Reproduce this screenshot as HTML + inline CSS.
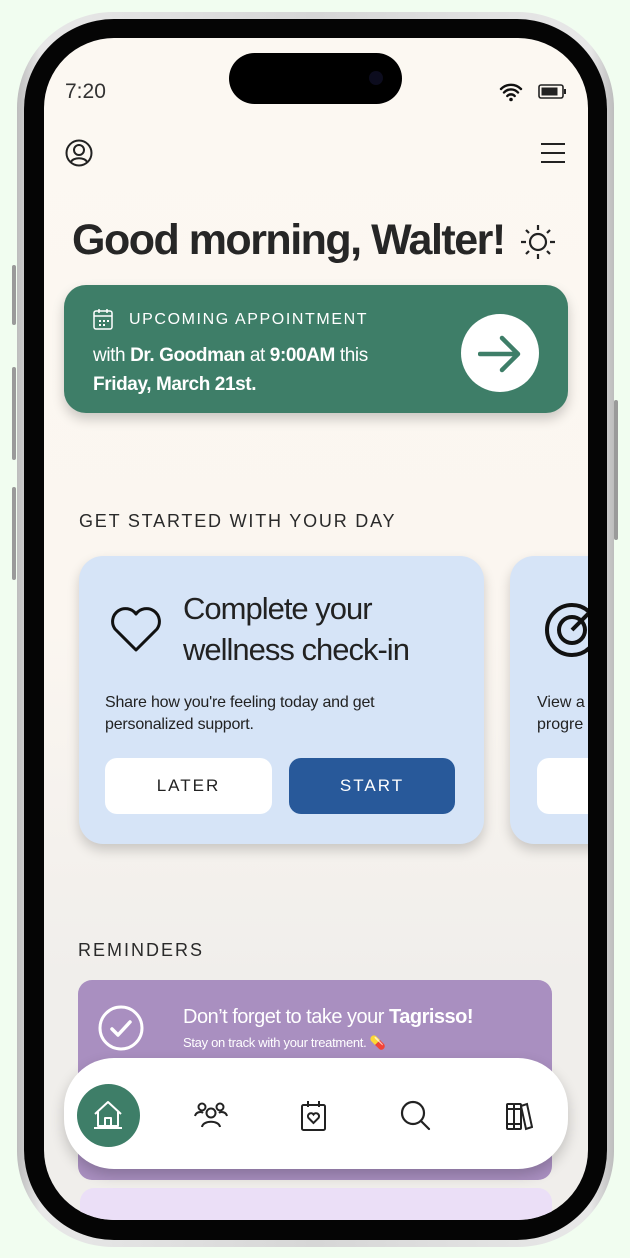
<!DOCTYPE html><html><head><style>
*{margin:0;padding:0;box-sizing:border-box}
body{width:630px;height:1258px;background:#f1fdf0;position:relative;overflow:hidden;font-family:"Liberation Sans",sans-serif;color:#222}
.frame{position:absolute;left:17px;top:12px;width:597px;height:1235px;border-radius:96px;background:linear-gradient(90deg,#bdbdbd,#e8e8e8 4%,#d6d6d6 50%,#e8e8e8 96%,#bdbdbd);}
.bezel{position:absolute;left:24px;top:19px;width:583px;height:1221px;border-radius:90px;background:#050505}
.screen{position:absolute;left:44px;top:38px;width:544px;height:1182px;border-radius:70px;overflow:hidden;background:linear-gradient(#fcf8f2 0%,#fbf6f0 50%,#f0eeeb 80%)}
.btn{position:absolute;background:#9a9a9a;width:4px;border-radius:2px}
.abs{position:absolute}
</style></head><body>
<div class="frame"></div>
<div class="btn" style="left:12px;top:265px;height:60px"></div>
<div class="btn" style="left:12px;top:367px;height:93px"></div>
<div class="btn" style="left:12px;top:487px;height:93px"></div>
<div class="btn" style="left:614px;top:400px;height:140px"></div>
<div class="bezel"></div>
<div class="screen">
  <div class="abs" style="left:185px;top:15px;width:173px;height:51px;border-radius:26px;background:#000"></div>
  <div class="abs" style="left:325px;top:33px;width:14px;height:14px;border-radius:7px;background:#0c0c1e"></div>
  <div class="abs" style="left:21px;top:42px;font-size:21px;color:#333">7:20</div>
  <svg class="abs" style="left:455px;top:44px" width="24" height="20" viewBox="0 0 24 20"><path d="M2 7a14 14 0 0 1 20 0M5 10.5a9.5 9.5 0 0 1 14 0M8.3 14a5 5 0 0 1 7.4 0" stroke="#111" stroke-width="2.4" fill="none" stroke-linecap="round"/><circle cx="12" cy="17.5" r="1.8" fill="#111"/></svg>
  <svg class="abs" style="left:494px;top:46px" width="30" height="16"><rect x="1" y="1" width="24" height="13" rx="2" fill="none" stroke="#222" stroke-width="1.6"/><rect x="3.5" y="3.5" width="16" height="8" fill="#222"/><rect x="26" y="5" width="2" height="5" fill="#222"/></svg>
  <svg class="abs" style="left:21px;top:101px" width="28" height="28" viewBox="0 0 28 28"><circle cx="14" cy="14" r="12.5" fill="none" stroke="#222" stroke-width="2"/><circle cx="14" cy="11" r="5" fill="none" stroke="#222" stroke-width="2"/><path d="M6 23c2-5 14-5 16 0" fill="none" stroke="#222" stroke-width="2"/></svg>
  <svg class="abs" style="left:496px;top:104px" width="26" height="22"><path d="M1 2h24M1 11h24M1 20h24" stroke="#222" stroke-width="2"/></svg>
  <div class="abs" style="left:28px;top:178px;font-size:43px;font-weight:bold;letter-spacing:-1.5px;color:#262626">Good morning, Walter!</div>
  <svg class="abs" style="left:474px;top:184px" width="40" height="40" viewBox="0 0 40 40"><circle cx="20" cy="20" r="8" fill="none" stroke="#222" stroke-width="2.2"/><g stroke="#222" stroke-width="2.2"><path d="M20 3v5M20 32v5M3 20h5M32 20h5M8 8l3 3M29 29l3 3M8 32l3-3M29 11l3-3"/></g></svg>
  <div class="abs" style="left:20px;top:247px;width:504px;height:128px;border-radius:22px;background:#3e7e68;box-shadow:0 6px 12px rgba(0,0,0,.2)"></div>
  <svg class="abs" style="left:49px;top:270px" width="20" height="22"><rect x="1" y="3" width="18" height="18" rx="2" fill="none" stroke="#fff" stroke-width="1.5"/><path d="M1 8h18M6 1v4M14 1v4" stroke="#fff" stroke-width="1.5"/><g fill="#fff"><rect x="6" y="12" width="2" height="2"/><rect x="10" y="12" width="2" height="2"/><rect x="14" y="12" width="2" height="2"/><rect x="6" y="16" width="2" height="2"/><rect x="10" y="16" width="2" height="2"/></g></svg>
  <div class="abs" style="left:85px;top:273px;font-size:16px;letter-spacing:1.6px;color:#fff">UPCOMING APPOINTMENT</div>
  <div class="abs" style="left:49px;top:303px;font-size:19px;line-height:29px;color:#fff;letter-spacing:-.4px">with <b>Dr. Goodman</b> at <b>9:00AM</b> this<br><b>Friday, March 21st.</b></div>
  <div class="abs" style="left:417px;top:276px;width:78px;height:78px;border-radius:50%;background:#fff"></div>
  <svg class="abs" style="left:434px;top:296px" width="44" height="40"><path d="M2 20h38M24 4l16 16-16 16" stroke="#3e7e68" stroke-width="4.5" fill="none" stroke-linecap="round" stroke-linejoin="round"/></svg>
  <div class="abs" style="left:35px;top:473px;font-size:18px;letter-spacing:1.8px;color:#2a2a2a">GET STARTED WITH YOUR DAY</div>
  <div class="abs" style="left:35px;top:518px;width:405px;height:288px;border-radius:24px;background:#d6e4f7;box-shadow:0 6px 12px rgba(0,0,0,.18)"></div>
  <svg class="abs" style="left:64px;top:566px" width="56" height="50" viewBox="0 0 56 50"><path d="M28 46L7 25A12 12 0 0 1 28 10 12 12 0 0 1 49 25Z" fill="none" stroke="#111" stroke-width="3" stroke-linejoin="round"/></svg>
  <div class="abs" style="left:139px;top:550px;font-size:31px;line-height:41px;letter-spacing:-1px;color:#222">Complete your<br>wellness check-in</div>
  <div class="abs" style="left:61px;top:654px;font-size:16px;line-height:22px;color:#222;letter-spacing:-.2px">Share how you're feeling today and get<br>personalized support.</div>
  <div class="abs" style="left:61px;top:720px;width:167px;height:56px;border-radius:12px;background:#fff;text-align:center;line-height:56px;font-size:17px;letter-spacing:2px">LATER</div>
  <div class="abs" style="left:245px;top:720px;width:166px;height:56px;border-radius:12px;background:#28599a;color:#fff;text-align:center;line-height:56px;font-size:17px;letter-spacing:2px">START</div>
  <div class="abs" style="left:466px;top:518px;width:200px;height:288px;border-radius:24px;background:#d6e4f7;box-shadow:0 6px 12px rgba(0,0,0,.18)"></div>
  <svg class="abs" style="left:498px;top:562px" width="60" height="60"><circle cx="30" cy="30" r="25" fill="none" stroke="#111" stroke-width="4"/><circle cx="30" cy="30" r="13" fill="none" stroke="#111" stroke-width="4"/><path d="M30 30l22-22" stroke="#111" stroke-width="4"/></svg>
  <div class="abs" style="left:493px;top:654px;font-size:16px;line-height:22px">View a<br>progre</div>
  <div class="abs" style="left:493px;top:720px;width:100px;height:56px;border-radius:12px;background:#fff"></div>
  <div class="abs" style="left:34px;top:902px;font-size:18px;letter-spacing:2px;color:#2a2a2a">REMINDERS</div>
  <div class="abs" style="left:34px;top:942px;width:474px;height:200px;border-radius:14px;background:#a98fc0"></div>
  <div class="abs" style="left:36px;top:1150px;width:472px;height:60px;border-radius:14px;background:#ebdff7"></div>
  <svg class="abs" style="left:53px;top:966px" width="48" height="48"><circle cx="24" cy="24" r="21" fill="none" stroke="#fff" stroke-width="3"/><path d="M15 25l6 6 12-13" fill="none" stroke="#fff" stroke-width="3.5" stroke-linecap="round" stroke-linejoin="round"/></svg>
  <div class="abs" style="left:139px;top:968px;font-size:20px;color:#fff;letter-spacing:-.5px">Don’t forget to take your <b>Tagrisso!</b></div>
  <div class="abs" style="left:139px;top:997px;font-size:13px;color:#fff;letter-spacing:-.3px">Stay on track with your treatment. 💊</div>
  <div class="abs" style="left:20px;top:1020px;width:504px;height:111px;border-radius:50px;background:#fff;box-shadow:0 6px 14px rgba(0,0,0,.2)"></div>
  <div class="abs" style="left:33px;top:1046px;width:63px;height:63px;border-radius:50%;background:#3e7e68"></div>
  <svg class="abs" style="left:48px;top:1062px" width="34" height="30"><path d="M3 14L16 2l13 12M6 12v14h20V12M13 26v-8h6v8M2 28h28" fill="none" stroke="#fff" stroke-width="2" stroke-linejoin="round"/></svg>
  <svg class="abs" style="left:150px;top:1062px" width="34" height="30"><g fill="none" stroke="#222" stroke-width="2"><circle cx="17" cy="13" r="4.5"/><path d="M8 27c1-7 17-7 18 0"/><circle cx="8" cy="7" r="3.5"/><circle cx="26" cy="7" r="3.5"/><path d="M1 16c1-4 6-5 8-3M33 16c-1-4-6-5-8-3"/></g></svg>
  <svg class="abs" style="left:256px;top:1062px" width="28" height="32"><g fill="none" stroke="#222" stroke-width="2"><rect x="2" y="5" width="23" height="25" rx="1.5"/><path d="M8 1v6M19 1v6"/><path d="M13.5 23l-5-5a3 3 0 0 1 5-3.5 3 3 0 0 1 5 3.5z"/></g></svg>
  <svg class="abs" style="left:356px;top:1062px" width="32" height="32"><g fill="none" stroke="#222" stroke-width="2.2"><circle cx="13" cy="13" r="11"/><path d="M21 21l8 8" stroke-linecap="round"/></g></svg>
  <svg class="abs" style="left:461px;top:1062px" width="28" height="32"><g fill="none" stroke="#222" stroke-width="2"><rect x="2" y="4" width="7" height="25" rx="1"/><rect x="9" y="4" width="7" height="25" rx="1"/><path d="M16 6l6-2 5 23-6 2z"/><path d="M2 9h14M2 24h14"/></g></svg>
</div>
</body></html>
